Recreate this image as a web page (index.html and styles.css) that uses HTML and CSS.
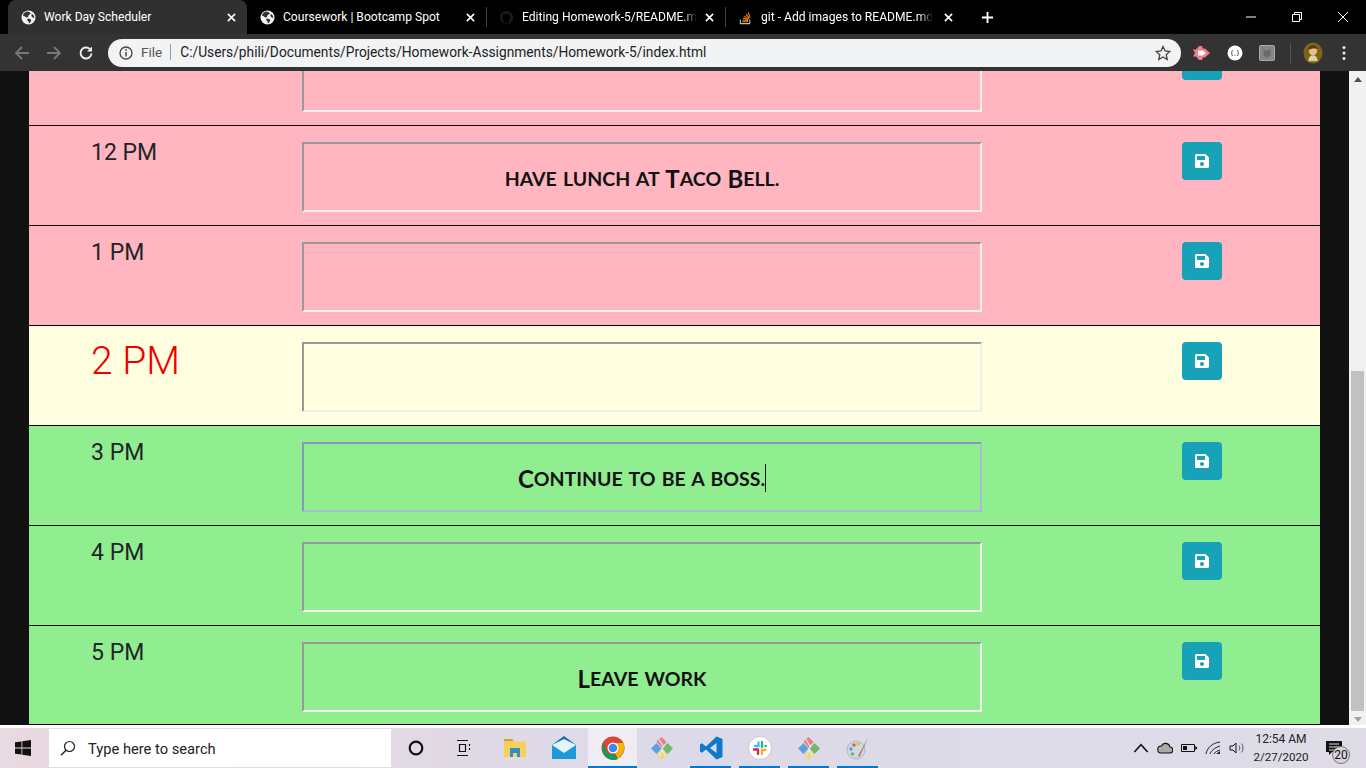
FILE: index.html
```html
<!DOCTYPE html>
<html lang="en">
<head>
    <meta charset="UTF-8">
    <meta name="viewport" content="width=device-width, initial-scale=1.0">
    <title>Work Day Scheduler</title>
    <link rel="stylesheet" href="styles.css">
</head>
<body>
    <svg class="defs" width="0" height="0">
        <symbol id="save" viewBox="0 0 448 512">
            <path fill="#fff" d="M433.941 129.941l-83.882-83.882A48 48 0 0 0 316.118 32H48C21.49 32 0 53.49 0 80v352c0 26.51 21.49 48 48 48h352c26.51 0 48-21.49 48-48V163.882a48 48 0 0 0-14.059-33.941zM224 416c-35.346 0-64-28.654-64-64 0-35.346 28.654-64 64-64s64 28.654 64 64c0 35.346-28.654 64-64 64zm96-304.52V212c0 6.627-5.373 12-12 12H76c-6.627 0-12-5.373-12-12V108c0-6.627 5.373-12 12-12h228.52c3.183 0 6.235 1.264 8.485 3.515l3.48 3.48A11.996 11.996 0 0 1 320 111.48z"/>
        </symbol>
        <symbol id="globe" viewBox="0 0 16 16">
            <circle cx="8" cy="8" r="7.500" fill="#f1f3f4"/>
            <path fill="#333" d="M3 3.500l3-1.800 3 .5 1.500 1.500L8 5.500 7.500 7.500 5.500 8 3.500 6.500 2 6zM7 9l3 .5 1 1.500-1 2-1.500 1.500-.5-2.500L6.500 11zM11.500 4l2 1.500.8 3-1.800-.5-1.500-1.500z"/>
        </symbol>
        <symbol id="close" viewBox="0 0 10 10">
            <path d="M1 1l8 8M9 1l-8 8" stroke="#fff" stroke-width="1.800" fill="none"/>
        </symbol>
        <symbol id="gem" viewBox="0 0 24 24">
            <path fill="#5f9fe0" d="M1 12.500l5.500-5.500 5 5.500-5 5.500z"/>
            <path fill="#e87f86" d="M6.500 5.500L11.500 1l5 5-5 5.500z"/>
            <path fill="#72b86c" d="M17.500 7l5.500 5.500-5.500 5.500-5-5.500z"/>
            <path fill="#eed766" d="M7 18.500l5-5.500 5 5.500-5 5z"/>
            <path d="M9 3.500l5 8M12.500 12.500L9.500 20M15 20l-3-7.500" stroke="#eceaf0" stroke-width="1.200" fill="none"/>
        </symbol>
    </svg>

    <div class="tabstrip">
        <div class="tab active">
            <svg class="favicon"><use href="#globe"/></svg>
            <span class="tab-title">Work Day Scheduler</span>
            <svg class="tab-close"><use href="#close"/></svg>
        </div>
        <div class="tab">
            <svg class="favicon"><use href="#globe"/></svg>
            <span class="tab-title">Coursework | Bootcamp Spot</span>
            <svg class="tab-close"><use href="#close"/></svg>
        </div>
        <div class="tab">
            <svg class="favicon" viewBox="0 0 16 16"><circle cx="8" cy="8" r="7" fill="#1b1b1b"/><path d="M5 14v-3c-1-1-1.500-2-1.500-3.500 0-1 .5-2 1-2.500V3.500L7 4.500h2L11 3.500V5c.5.5 1 1.500 1 2.500 0 1.500-.5 2.500-1.500 3.500v3" fill="#000"/></svg>
            <span class="tab-title fade">Editing Homework-5/README.m</span>
            <svg class="tab-close"><use href="#close"/></svg>
        </div>
        <div class="tab">
            <svg class="favicon" viewBox="0 0 16 16"><path d="M2.500 10v4.500h10V10" fill="none" stroke="#bcbbbb" stroke-width="1.200"/><path d="M4.500 12.500h6M4.700 10.600l5.900.8M5.300 8.500l5.500 2M6.500 6.500l4.800 3.200M8.500 4.500l3.500 4.500M10.800 2.500l2 5.300" stroke="#f48024" stroke-width="1.200" fill="none"/></svg>
            <span class="tab-title fade">git - Add images to README.md</span>
            <svg class="tab-close"><use href="#close"/></svg>
        </div>
        <svg class="new-tab" viewBox="0 0 14 14"><path d="M7 1v12M1 7h12" stroke="#fff" stroke-width="2"/></svg>
        <div class="window-controls">
            <svg viewBox="0 0 12 12"><path d="M1 6h10" stroke="#fff"/></svg>
            <svg viewBox="0 0 12 12"><path d="M1.500 3.500h7v7h-7zM3.500 3.500v-2h7v7h-2" stroke="#fff" fill="none"/></svg>
            <svg viewBox="0 0 12 12"><path d="M1 1l10 10M11 1L1 11" stroke="#fff" fill="none"/></svg>
        </div>
    </div>

    <div class="toolbar">
        <svg class="nav" viewBox="0 0 16 16"><path d="M15 8H2M8 2L2 8l6 6" stroke="#777" stroke-width="1.800" fill="none"/></svg>
        <svg class="nav" viewBox="0 0 16 16"><path d="M1 8h13M8 2l6 6-6 6" stroke="#777" stroke-width="1.800" fill="none"/></svg>
        <svg class="nav" viewBox="0 0 16 16"><path d="M13.500 8.500A5.500 5.500 0 1 1 11.800 4" stroke="#eee" stroke-width="1.900" fill="none"/><path d="M14 1.500V6.500H9z" fill="#eee"/></svg>
        <div class="omnibox">
            <svg class="info" viewBox="0 0 14 14"><circle cx="7" cy="7" r="6" fill="none" stroke="#444" stroke-width="1.300"/><path d="M7 6v4.500M7 3.300v1.500" stroke="#444" stroke-width="1.500"/></svg>
            <span class="scheme">File</span>
            <span class="url">C:/Users/phili/Documents/Projects/Homework-Assignments/Homework-5/index.html</span>
            <svg class="star" viewBox="0 0 16 16"><path d="M8 1.500l2 4.500 4.800.5-3.600 3.200 1 4.800L8 12l-4.200 2.500 1-4.800L1.200 6.500 6 6z" fill="none" stroke="#444" stroke-width="1.300"/></svg>
        </div>
        <div class="extensions">
            <svg class="ext ext-first" viewBox="0 0 18 16"><path d="M1 4.500h3L7 1h3l1 2.500h2L18 8l-5 4.500h-2L10 15H7L4 11.500H1l2-3.500z" fill="#ee7f85"/><path d="M6 5.500h5l3 2.500-3 2.500H6z" fill="#fff"/></svg>
            <svg class="ext" viewBox="0 0 16 16"><circle cx="8" cy="8" r="7.500" fill="#fff"/><path d="M5.500 5c-1 1.500-1 4.500 0 6M10.500 5c1 1.500 1 4.500 0 6M7.500 10.500h1" stroke="#555" fill="none"/></svg>
            <svg class="ext" viewBox="0 0 16 16"><rect x=".5" y=".5" width="15" height="15" rx="1" fill="#858585" stroke="#aaa"/><path d="M4.500 4l1.500 1.500h4L11.500 4v6.500L8 12.500l-3.500-2z" fill="#6a6a6a"/></svg>
            <span class="ext-sep"></span>
            <svg class="avatar" viewBox="0 0 22 24"><ellipse cx="11" cy="12" rx="10.500" ry="11.500" fill="#7f6512"/><ellipse cx="11" cy="9.500" rx="4.500" ry="5" fill="#e9c08f"/><path d="M6 9C5.500 4.500 9 3.500 11 3.500s5.500 1 5 4.500c-2-1.500-7-1.500-10 1z" fill="#5a3a14"/><path d="M6 20c.5-4 2.500-5.500 5-5.500s4.500 1.500 5 5.500z" fill="#dcd2a4"/><path d="M6 20.500h10" stroke="#efe6bc"/></svg>
            <svg class="kebab" viewBox="0 0 4 16"><circle cx="2" cy="2.500" r="1.500" fill="#eee"/><circle cx="2" cy="8" r="1.500" fill="#eee"/><circle cx="2" cy="13.500" r="1.500" fill="#eee"/></svg>
        </div>
    </div>

    <div class="viewport">
        <div class="page">
            <div class="schedule">
                <div class="row past">
                    <div class="hour"></div>
                    <div class="note"></div>
                    <div class="save-col"><button class="save-btn"><svg><use href="#save"/></svg></button></div>
                </div>
                <div class="row past">
                    <div class="hour">12 PM</div>
                    <div class="note">have lunch at <span class="big">T</span>aco <span class="big">B</span>ell.</div>
                    <div class="save-col"><button class="save-btn"><svg><use href="#save"/></svg></button></div>
                </div>
                <div class="row past">
                    <div class="hour">1 PM</div>
                    <div class="note"></div>
                    <div class="save-col"><button class="save-btn"><svg><use href="#save"/></svg></button></div>
                </div>
                <div class="row present">
                    <div class="hour">2 PM</div>
                    <div class="note"></div>
                    <div class="save-col"><button class="save-btn"><svg><use href="#save"/></svg></button></div>
                </div>
                <div class="row future">
                    <div class="hour">3 PM</div>
                    <div class="note focused"><span class="big">C</span>ontinue to be a boss.<span class="caret"></span></div>
                    <div class="save-col"><button class="save-btn"><svg><use href="#save"/></svg></button></div>
                </div>
                <div class="row future">
                    <div class="hour">4 PM</div>
                    <div class="note"></div>
                    <div class="save-col"><button class="save-btn"><svg><use href="#save"/></svg></button></div>
                </div>
                <div class="row future">
                    <div class="hour">5 PM</div>
                    <div class="note"><span class="big">L</span>eave work</div>
                    <div class="save-col"><button class="save-btn"><svg><use href="#save"/></svg></button></div>
                </div>
            </div>
        </div>
        <div class="scrollbar">
            <svg class="arrow" viewBox="0 0 8 5"><path d="M0 5l4-5 4 5z" fill="#505050"/></svg>
            <div class="track"><div class="thumb"></div></div>
            <svg class="arrow" viewBox="0 0 8 5"><path d="M0 0l4 5 4-5z" fill="#a3a3a3"/></svg>
        </div>
    </div>

    <div class="taskbar">
        <div class="start">
            <svg viewBox="0 0 16 16"><path fill="#111" d="M0 2.300l6.500-.9v6.200H0zM7.300 1.300L16 0v7.600H7.300zM0 8.400h6.500v6.200L0 13.700zM7.300 8.400H16V16l-8.700-1.300z"/></svg>
        </div>
        <div class="search">
            <svg viewBox="0 0 16 16"><circle cx="9.500" cy="6.500" r="5" fill="none" stroke="#222" stroke-width="1.200"/><path d="M6 10.200L1 15.300" stroke="#222" stroke-width="1.400"/></svg>
            <span>Type here to search</span>
        </div>
        <div class="task-item cortana"><svg viewBox="0 0 16 16"><circle cx="8" cy="8" r="6.300" fill="none" stroke="#111" stroke-width="2.200"/></svg></div>
        <div class="task-item taskview"><svg viewBox="0 0 16 16"><path d="M1 .5h11M1 15.500h11M3.500 4.500h6v7h-6zM13.500 4v2M13.500 8v2" stroke="#111" stroke-width="1.200" fill="none"/></svg></div>
        <div class="task-item explorer"><svg viewBox="0 0 22 20"><path d="M0 2a1 1 0 0 1 1-1h7l2 2.500H0z" fill="#d99f1e"/><path d="M0 3.500h22V18a1 1 0 0 1-1 1H1a1 1 0 0 1-1-1z" fill="#f7cf5b"/><path d="M6 10h10v9h-3v-4H9v4H6z" fill="#2f8ecb"/></svg></div>
        <div class="task-item mail"><svg viewBox="0 0 24 24"><path d="M0 9L12 0l12 9v14H0z" fill="#0f6cb5"/><path d="M0 9h24v14H0z" fill="#1b9ad6"/><path d="M0 9l12 8 12-8-12-6z" fill="#e6f3fb"/></svg></div>
        <div class="task-item chrome current"><svg viewBox="0 0 24 24"><circle cx="12" cy="12" r="11.500" fill="#db4437"/><path d="M1.800 6.600L7 18l5-.5 5 5.500c-3 1.500-7 1.500-10-.5C2 20 .2 12 1.800 6.600z" fill="#0f9d58"/><path d="M12 7h10.500c2 5 0 12-5.500 15.500L13 15z" fill="#f4b400"/><circle cx="12" cy="12" r="5.500" fill="#fff"/><circle cx="12" cy="12" r="4.300" fill="#4285f4"/></svg></div>
        <div class="task-item gem"><svg><use href="#gem"/></svg></div>
        <div class="task-item vscode running"><svg viewBox="0 0 24 24"><path d="M17.500.5L23.500 3v18l-6 2.500L7 13.500l-4 3.200-2-1V8.300l2-1 4 3.200zM17.500 7L11 12l6.500 5z" fill="#0b7ac9"/></svg></div>
        <div class="task-item slack running"><svg viewBox="0 0 24 24"><circle cx="12" cy="12" r="11.500" fill="#fff" stroke="#bbb" stroke-width=".7"/><path d="M10.500 6.500v3.500H7" stroke="#36c5f0" stroke-width="2.300" stroke-linecap="round" fill="none"/><path d="M14 6v5M18 10h-.5" stroke="#2eb67d" stroke-width="2.300" stroke-linecap="round"/><path d="M14 14h3.500M14 14v4" stroke="#ecb22e" stroke-width="2.300" stroke-linecap="round"/><path d="M10 13.500H6M10 13.500V18" stroke="#e01e5a" stroke-width="2.300" stroke-linecap="round"/></svg></div>
        <div class="task-item gem running"><svg><use href="#gem"/></svg></div>
        <div class="task-item paint running"><svg viewBox="0 0 24 24"><ellipse cx="10" cy="14" rx="9" ry="9" fill="#cfd8e3" stroke="#8aa" stroke-width=".6"/><circle cx="8" cy="9" r="1.700" fill="#e0574f"/><circle cx="12" cy="8" r="1.700" fill="#e7c23a"/><circle cx="5" cy="13" r="1.700" fill="#4da3d8"/><circle cx="6.500" cy="18" r="1.700" fill="#6bb36b"/><path d="M22.500 1l-9 20-1.500-1z" fill="#b5793a"/></svg></div>

        <div class="tray">
            <svg class="tray-icon" viewBox="0 0 12 8"><path d="M1 7l5-5.500L11 7" fill="none" stroke="#111" stroke-width="1.200"/></svg>
            <svg class="tray-icon" viewBox="0 0 16 12"><path d="M4 11h8.500a3 3 0 0 0 .5-6 4.500 4.500 0 0 0-8.500-1A3.500 3.500 0 0 0 4 11z" fill="#aaa" stroke="#111" stroke-width="1.100"/></svg>
            <svg class="tray-icon" viewBox="0 0 16 10"><path d="M.5 1.500h13v7H.5zM14 4h1.500v2H14z" fill="none" stroke="#111"/><path d="M2 3h4v4H2z" fill="#111"/></svg>
            <svg class="tray-icon" viewBox="0 0 16 14"><path d="M1 13C2 7 7 2 15 1M5 13c1-3 4-6 10-8M9 13c1-2 3-3 6-4" stroke="#222" fill="none"/><path d="M11 13l4-3v3z" fill="#222"/></svg>
            <svg class="tray-icon" viewBox="0 0 16 14"><path d="M1 5h3l3-3v10L4 9H1z" fill="none" stroke="#111"/><path d="M10 4.500c1 1.500 1 3.500 0 5M12.500 2.500c2 2.500 2 6.500 0 9" stroke="#555" fill="none"/></svg>
        </div>
        <div class="clock">
            <span>12:54 AM</span>
            <span class="date">2/27/2020</span>
        </div>
        <div class="notify">
            <svg viewBox="0 0 16 14"><path d="M0 0h16v11H6l-3 3v-3H0z" fill="#111"/><path d="M3 3h10M3 6h10M3 9h7" stroke="#e3dde8"/></svg>
            <span class="badge">20</span>
        </div>
    </div>
</body>
</html>
```

FILE: styles.css
```css
* { box-sizing: border-box; }
html, body { height: 100%; }
body { margin: 0; width: 1366px; height: 768px; overflow: hidden; display: flex; flex-direction: column; font-family: "Open Sans", Arial, sans-serif; background-color: #111; }
.defs { position: absolute; }

/* browser tabs */
.tabstrip { height: 34px; background-color: #000; display: flex; align-items: center; padding-left: 8px; color: #fff; font-family: "Roboto", sans-serif; font-size: 12.1px; flex: none; }
.tab { width: 239px; height: 34px; display: flex; align-items: center; padding-left: 13px; position: relative; }
.tab.active { background-color: #303030; border-radius: 8px 8px 0 0; }
.tab:nth-child(3)::before, .tab:nth-child(4)::before { content: ""; position: absolute; left: 0; top: 7px; height: 20px; width: 1px; background-color: #444; }
.favicon { width: 15px; height: 15px; flex: none; margin-right: 8px; }
.tab-title { white-space: nowrap; }
.fade { -webkit-mask-image: linear-gradient(90deg, #000 92%, transparent); mask-image: linear-gradient(90deg, #000 92%, transparent); }
.tab-close { width: 9px; height: 9px; margin-left: auto; margin-right: 11px; flex: none; }
.new-tab { width: 13px; height: 13px; margin-left: 17px; }
.window-controls { margin-left: auto; display: flex; gap: 34px; padding-right: 17px; }
.window-controls svg { width: 12px; height: 12px; }

/* address bar */
.toolbar { height: 37px; background-color: #333; display: flex; align-items: center; padding-left: 14px; flex: none; }
.nav { width: 16px; height: 16px; margin-right: 16px; }
.omnibox { width: 1073px; height: 28px; margin-left: -2px; background-color: #f1f3f4; border-radius: 14px; display: flex; align-items: center; padding: 0 10px 0 11px; font-family: "Roboto", sans-serif; font-size: 13.5px; color: #222; }
.info { width: 14px; height: 14px; margin-right: 8px; }
.scheme { color: #555; padding-right: 8px; margin-right: 9px; border-right: 1px solid #999; line-height: 16px; margin-top: -1px; }
.url { font-size: 13.75px; margin-top: -2px; }
.star { width: 16px; height: 16px; margin-left: auto; }
.extensions { display: flex; align-items: center; flex: 1; }
.ext { width: 16px; height: 16px; margin-right: 16px; }
.ext-first { width: 18px; margin-left: 11px; margin-right: 17px; }
.ext-sep { width: 1px; height: 20px; background-color: #555; margin-right: 11px; margin-left: -1px; }
.avatar { width: 20px; height: 22px; margin-right: 19px; margin-left: 1px; }
.kebab { width: 4px; height: 16px; }

/* scheduler page */
.viewport { height: 654px; display: flex; overflow: hidden; flex: none; }
.page { width: 1349px; padding: 0 29px; background-color: #111; }
.schedule { margin-top: -45px; }
.row { height: 100px; display: grid; grid-template-columns: 273px 680px 1fr; padding-top: 16px; border-bottom: 1px solid #000; }
.row:last-child { height: 99px; }
.past { background-color: lightpink; }
.present { background-color: lightyellow; }
.future { background-color: lightgreen; }
.hour { padding: 1px 0 0 62px; font-family: "Roboto", sans-serif; font-size: 23px; line-height: 20px; color: #212529; }
.present .hour { font-size: 39px; font-weight: 300; line-height: 36px; color: #ee0000; }
.note { height: 70px; padding-top: 3px; border: 2px solid; border-color: #999 #f2f2f2 #f2f2f2 #999; display: flex; align-items: center; justify-content: center; white-space: pre-wrap; font-family: "Lato", sans-serif; font-weight: bold; text-transform: uppercase; font-size: 19.5px; word-spacing: 1.5px; color: #111; }
.big { font-size: 24px; }
.present .note { border-color: #999 #eee #eee #999; }
.note.focused { border-color: #7f9db9 #a4bcd6 #a4bcd6 #7f9db9; }
.caret { width: 1px; height: 28px; margin-top: -2px; background-color: #000; }
.save-col { padding-left: 200px; }
.save-btn { width: 40px; height: 38px; border: none; border-radius: 4px; background-color: #17a2b8; padding: 0; display: flex; align-items: center; justify-content: center; }
.save-btn svg { width: 14px; height: 16px; }

/* scrollbar */
.scrollbar { width: 17px; background-color: #f1f1f1; display: flex; flex-direction: column; align-items: center; }
.arrow { width: 8px; height: 5px; margin: 6px 0; flex: none; }
.track { flex: 1; width: 100%; padding: 283px 2px 0; }
.thumb { height: 340px; background-color: #c1c1c1; }

/* windows taskbar */
.taskbar { height: 40px; margin-top: 3px; padding-right: 12px; background: linear-gradient(90deg, #e9d9e0, #dcdae8 50%, #dfdce8); display: flex; align-items: center; flex: none; position: relative; }
.taskbar::before { content: ""; position: absolute; left: 0; right: 0; top: -3px; height: 3px; background-color: #fff; }
.start { width: 49px; display: flex; justify-content: center; }
.start svg { width: 16px; height: 16px; margin-left: -3px; }
.search { width: 342px; height: 38px; background-color: #fff; display: flex; align-items: center; padding-left: 11px; font-family: "Roboto", sans-serif; font-size: 14.7px; color: #222; }
.search span { margin-top: 1px; }
.search svg { width: 16px; height: 16px; margin-right: 12px; }
.task-item { width: 49px; height: 40px; display: flex; align-items: center; justify-content: center; position: relative; }
.task-item svg { width: 24px; height: 24px; }
.cortana { margin-left: 1px; }
.cortana svg { width: 16px; height: 16px; margin-left: -2px; }
.taskview svg { width: 16px; height: 16px; margin-left: -3px; }
.explorer svg { width: 22px; height: 20px; }
.current { background-color: #efedf3; }
.current::after, .running::after { content: ""; position: absolute; left: 4px; right: 4px; bottom: 0; height: 2px; background-color: #0078d7; }
.current::after { left: 0; right: 0; }
.tray { margin-left: auto; display: flex; align-items: center; gap: 8px; }
.tray-icon { width: 16px; height: 14px; }
.clock { width: 62px; margin-left: 5px; display: flex; flex-direction: column; align-items: center; font-family: "Roboto", sans-serif; font-size: 12px; line-height: 18px; color: #222; }
.date { font-size: 11.6px; }
.notify { width: 40px; margin-left: 2px; position: relative; height: 40px; }
.notify svg { width: 16px; height: 14px; position: absolute; left: 12px; top: 13px; }
.badge { position: absolute; left: 18px; top: 18px; width: 18px; height: 18px; border: 1px solid #777; border-radius: 50%; background-color: #d8d4dd; font-family: "Roboto", sans-serif; font-size: 12px; line-height: 16px; text-align: center; color: #111; }
```
